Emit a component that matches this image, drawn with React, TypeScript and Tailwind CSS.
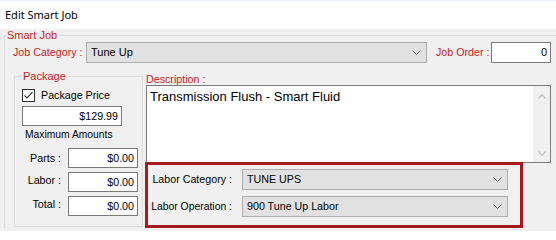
import React from 'react';

// --- small drawn glyphs (combo arrow, scroll arrows, check mark) ---
const ChevronDown = ({ color = '#606060', w = 9, h = 5, sw = 1 }: { color?: string; w?: number; h?: number; sw?: number }) => (
    <svg width={w} height={h} viewBox={`0 0 ${w} ${h}`} fill="none">
        <polyline points={`0.5,0.5 ${w / 2},${h - 0.5} ${w - 0.5},0.5`} stroke={color} strokeWidth={sw} />
    </svg>
);

const ChevronUp = ({ color = '#c4c4c4', w = 8, h = 5, sw = 1.4 }: { color?: string; w?: number; h?: number; sw?: number }) => (
    <svg width={w} height={h} viewBox={`0 0 ${w} ${h}`} fill="none">
        <polyline points={`0.5,${h - 0.5} ${w / 2},0.8 ${w - 0.5},${h - 0.5}`} stroke={color} strokeWidth={sw} />
    </svg>
);

const ComboBox = ({ value, className }: { value: string; className: string }) => (
    <div className={`flex h-[21px] items-center justify-between border border-[#adadad] bg-[#e1e1e1] pl-[4px] pr-[5px] ${className}`}>
        <span className="whitespace-nowrap leading-[13px]">{value}</span>
        <ChevronDown />
    </div>
);

const TextBox = ({ value, className }: { value: string; className: string }) => (
    <div className={`flex items-center justify-end border border-[#7a7a7a] bg-white pr-[3px] leading-[13px] ${className}`}>
        {value}
    </div>
);

// --- Maximum amounts rows ---
const amounts = [
    { label: 'Parts :', value: '$0.00', lift: '' },
    { label: 'Labor :', value: '$0.00', lift: 'mb-[3px]' },
    { label: 'Total :', value: '$0.00', lift: 'mb-[3px]' },
];

export default function App() {
    return (
        <div className="h-[231px] w-[556px] overflow-hidden whitespace-nowrap bg-[#f0f0f0] font-['Liberation_Sans',Arial,sans-serif] text-[10.7px] text-black">
            {/* title bar */}
            <div className="flex h-[29px] items-center border-t border-[#e3eef9] bg-white pl-[5px] font-['Noto_Sans',sans-serif] text-[11px]">
                Edit Smart Job
            </div>

            <fieldset className="ml-[4px] mt-[1px] border-l border-t border-[#dcdcdc] pl-[2px]">
                <legend className="pr-[2px] text-[11px] leading-[11px] text-[#cc1b1b]">Smart Job</legend>

                {/* job category row */}
                <div className="mt-[1px] flex h-[21px] items-center">
                    <div className="w-[79px] pl-[6px] text-[#cc1b1b]">Job Category :</div>
                    <ComboBox value="Tune Up" className="w-[341px] text-[11px]" />
                    <div className="w-[64px] pl-[9px] text-[#cc1b1b]">Job Order :</div>
                    <TextBox value="0" className="h-[21px] w-[60px] text-[11px]" />
                </div>

                <div className="mt-[8px] flex items-start">
                    {/* package group */}
                    <fieldset className="ml-[7px] h-[156px] w-[129px] border border-[#dcdcdc] pl-[6px]">
                        <legend className="px-[2px] text-[11px] leading-[11px] text-[#cc1b1b]">Package</legend>

                        <div className="ml-[1px] mt-[7px] flex h-[13px] items-center">
                            <div className="flex h-[13px] w-[13px] items-center justify-center border border-[#333333] bg-white">
                                <svg width="11" height="11" viewBox="0 0 11 11" fill="none">
                                    <polyline points="1.5,5.5 4,8 9.5,2.2" stroke="#333333" strokeWidth="1.2" />
                                </svg>
                            </div>
                            <span className="ml-[6px] leading-[13px]">Package Price</span>
                        </div>

                        <TextBox value="$129.99" className="ml-[1px] mt-[4px] h-[20px] w-[100px]" />

                        <div className="ml-[4px] mt-[2px] text-[10.3px] leading-[13px]">Maximum Amounts</div>

                        <div className="mt-[3px] flex flex-col">
                            {amounts.map((a) => (
                                <div key={a.label} className="mt-[4px] flex h-[20px] items-center">
                                    <div className={`w-[40px] text-right leading-[13px] ${a.lift}`}>{a.label}</div>
                                    <TextBox value={a.value} className="ml-[7px] h-[20px] w-[70px]" />
                                </div>
                            ))}
                        </div>
                    </fieldset>

                    {/* description + labor */}
                    <div className="ml-[3px] flex w-[405px] flex-col">
                        <div className="mt-[2px] leading-[12px] text-[#cc1b1b]">Description :</div>
                        <div className="flex h-[78px] border border-[#7a7a7a] bg-white">
                            <div className="flex-1 pl-[3px] pt-[3px] text-[13px] leading-[15px]">
                                Transmission Flush - Smart Fluid
                            </div>
                            <div className="flex w-[17px] flex-col items-center justify-between bg-[#f0f0f0] pb-[6px] pt-[8px]">
                                <ChevronUp />
                                <ChevronDown color="#c4c4c4" w={8} h={5} sw={1.4} />
                            </div>
                        </div>

                        <div className="-ml-[1px] -mt-[1px] h-[66px] w-[378px] border-[3px] border-[#a6191e]">
                            <div className="mt-[4px] flex h-[21px] items-center">
                                <div className="w-[84px] text-right">Labor Category :</div>
                                <ComboBox value="TUNE UPS" className="ml-[10px] w-[266px]" />
                            </div>
                            <div className="mt-[6px] flex h-[21px] items-center">
                                <div className="w-[84px] text-right text-[10.4px]">Labor Operation :</div>
                                <ComboBox value="900 Tune Up Labor" className="ml-[10px] w-[266px]" />
                            </div>
                        </div>
                    </div>
                </div>
            </fieldset>
        </div>
    );
}
